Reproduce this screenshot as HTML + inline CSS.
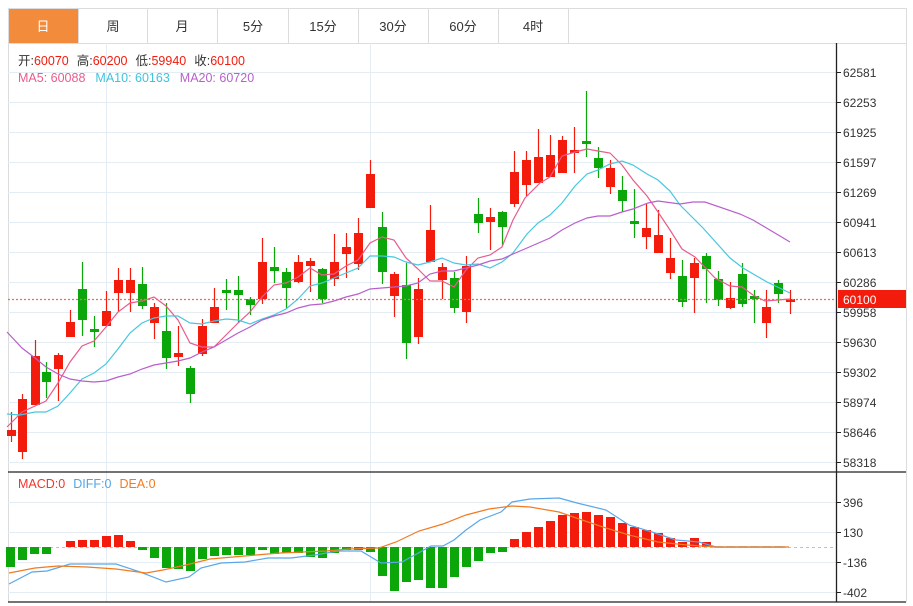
<!DOCTYPE html>
<html><head><meta charset="utf-8"><style>
html,body{margin:0;padding:0;background:#fff;width:913px;height:606px;overflow:hidden}
svg{display:block;font-family:"Liberation Sans","Noto Sans CJK SC",sans-serif}
</style></head><body>
<svg width="913" height="606" viewBox="0 0 913 606" xmlns="http://www.w3.org/2000/svg">
<!-- tabs -->
<rect x="8.5" y="8.5" width="898" height="35" fill="#fff" stroke="#dcdcdc"/>
<rect x="9" y="9" width="69" height="34" fill="#f28c3c"/>
<g stroke="#dcdcdc"><path d="M78.5 8V43M147.5 8V43M217.5 8V43M288.5 8V43M358.5 8V43M428.5 8V43M498.5 8V43M568.5 8V43"/></g>
<g font-size="13" fill="#333" text-anchor="middle">
<text x="43" y="31" fill="#fff">日</text><text x="113" y="31">周</text><text x="182" y="31">月</text><text x="253" y="31">5分</text><text x="323" y="31">15分</text><text x="393" y="31">30分</text><text x="463" y="31">60分</text><text x="533" y="31">4时</text>
</g>
<!-- frame -->
<path d="M8.5 43V602M906.5 43V602" stroke="#dcdcdc"/>
<!-- grid -->
<g stroke="#e3edf3"><path d="M8 72.5H837M8 102.5H837M8 132.5H837M8 162.5H837M8 192.5H837M8 222.5H837M8 252.5H837M8 282.5H837M8 312.5H837M8 342.5H837M8 372.5H837M8 402.5H837M8 432.5H837M8 462.5H837M8 502.5H837M8 532.5H837M8 562.5H837M8 592.5H837M106.5 43V602M370.5 43V602"/></g>
<!-- axis -->
<path d="M836.5 43V602M8 472H906M8 602H906" stroke="#222" stroke-width="1.3"/>
<g stroke="#222"><path d="M837 72.5h4M837 102.5h4M837 132.5h4M837 162.5h4M837 192.5h4M837 222.5h4M837 252.5h4M837 282.5h4M837 312.5h4M837 342.5h4M837 372.5h4M837 402.5h4M837 432.5h4M837 462.5h4M837 502.5h4M837 532.5h4M837 562.5h4M837 592.5h4"/></g>
<g font-size="12" fill="#333">
<text x="843" y="77">62581</text><text x="843" y="107">62253</text><text x="843" y="137">61925</text><text x="843" y="167">61597</text><text x="843" y="197">61269</text><text x="843" y="227">60941</text><text x="843" y="257">60613</text><text x="843" y="287">60286</text><text x="843" y="317">59958</text><text x="843" y="347">59630</text><text x="843" y="377">59302</text><text x="843" y="407">58974</text><text x="843" y="437">58646</text><text x="843" y="467">58318</text>
<text x="843" y="507">396</text><text x="843" y="537">130</text><text x="843" y="567">-136</text><text x="843" y="597">-402</text>
</g>
<!-- legend -->
<g font-size="12.5">
<text x="18" y="65"><tspan fill="#333">开:</tspan><tspan fill="#f21b0c">60070</tspan><tspan fill="#333" dx="8">高:</tspan><tspan fill="#f21b0c">60200</tspan><tspan fill="#333" dx="8">低:</tspan><tspan fill="#f21b0c">59940</tspan><tspan fill="#333" dx="8">收:</tspan><tspan fill="#f21b0c">60100</tspan></text>
<text x="18" y="82"><tspan fill="#ea5b8c">MA5: 60088</tspan><tspan fill="#3fc3de" dx="10">MA10: 60163</tspan><tspan fill="#b85fcc" dx="10">MA20: 60720</tspan></text>
<text x="18" y="488"><tspan fill="#f2352a">MACD:0</tspan><tspan fill="#4fa6ea" dx="8">DIFF:0</tspan><tspan fill="#f07b22" dx="8">DEA:0</tspan></text>
</g>
<!-- candles red -->
<path fill="none" stroke="#f21b0c" stroke-width="1.2" d="M11.5 412V442M22.5 394V459M35.5 340V405M58.5 353V401M70.5 310V337M106.5 291V326M118.5 268V312M130.5 268V312M154.5 303V339M178.5 326V366M202.5 319V356M214.5 288V323M262.5 238V304M298.5 255V283M310.5 258V292M334.5 234V286M346.5 233V278M358.5 218V270M370.5 160V208M394.5 272V317M418.5 278V344M430.5 205V262M442.5 263V299M466.5 256V323M490.5 208V250M514.5 151V207M526.5 151V196M538.5 129V183M550.5 135V177M562.5 136V173M574.5 127V173M610.5 160V194M646.5 204V249M658.5 210V253M670.5 238V279M694.5 258V313M730.5 282V309M766.5 290V338M790.5 290V314"/>
<path fill="#f21b0c" d="M7 430h9v6h-9zM18 399h9v53h-9zM31 356h9v49h-9zM54 355h9v14h-9zM66 322h9v15h-9zM102 311h9v15h-9zM114 280h9v13h-9zM126 280h9v13h-9zM150 307h9v16h-9zM174 353h9v4h-9zM198 326h9v28h-9zM210 307h9v16h-9zM258 262h9v37h-9zM294 262h9v20h-9zM306 261h9v5h-9zM330 262h9v17h-9zM342 247h9v7h-9zM354 233h9v31h-9zM366 174h9v34h-9zM390 274h9v22h-9zM414 289h9v48h-9zM426 230h9v32h-9zM438 267h9v13h-9zM462 266h9v46h-9zM486 217h9v5h-9zM510 172h9v32h-9zM522 160h9v25h-9zM534 157h9v26h-9zM546 155h9v22h-9zM558 140h9v33h-9zM570 150h9v3h-9zM606 168h9v19h-9zM642 228h9v9h-9zM654 235h9v18h-9zM666 258h9v15h-9zM690 263h9v15h-9zM726 298h9v10h-9zM762 307h9v16h-9zM786 299h9v3h-9z"/>
<!-- candles green -->
<path fill="none" stroke="#0aa60a" stroke-width="1.2" d="M46.5 362V398M82.5 262V336M94.5 316V347M142.5 267V309M166.5 303V369M190.5 366V403M226.5 279V310M238.5 276V323M250.5 297V315M274.5 247V283M286.5 268V309M322.5 268V303M382.5 212V284M406.5 263V359M454.5 272V313M478.5 198V233M502.5 211V246M586.5 91V157M598.5 147V178M622.5 176V212M634.5 189V238M682.5 260V307M706.5 253V303M718.5 271V306M742.5 263V307M754.5 290V323M778.5 280V303"/>
<path fill="#0aa60a" d="M42 372h9v10h-9zM78 289h9v31h-9zM90 329h9v3h-9zM138 284h9v22h-9zM162 331h9v27h-9zM186 368h9v26h-9zM222 290h9v3h-9zM234 290h9v5h-9zM246 299h9v6h-9zM270 267h9v4h-9zM282 272h9v16h-9zM318 269h9v30h-9zM378 227h9v45h-9zM402 285h9v58h-9zM450 278h9v30h-9zM474 214h9v9h-9zM498 212h9v15h-9zM582 141h9v3h-9zM594 158h9v10h-9zM618 190h9v11h-9zM630 221h9v3h-9zM678 276h9v26h-9zM702 256h9v13h-9zM714 279h9v21h-9zM738 274h9v30h-9zM750 296h9v3h-9zM774 283h9v11h-9z"/>
<!-- MA lines -->
<polyline fill="none" stroke="#ea5b8c" stroke-width="1.2" points="7,427 22,412 35,406 46,401 58,383 70,362 82,346 94,341 106,327 118,312 130,303 142,301 154,297 166,306 178,320 190,343 202,347 214,347 226,335 238,323 250,312 262,297 274,285 286,283 298,277 310,268 322,275 334,274 346,266 358,260 370,243 382,237 394,240 406,258 418,269 430,281 442,281 454,287 466,270 478,258 490,255 502,247 513,220 525,198 540,183 550,177 562,156 575,152 587,149 598,151 610,153 622,165 633,180 647,196 658,212 670,230 682,249 695,257 715,278 730,286 742,287 753,295 765,301 790,299"/>
<polyline fill="none" stroke="#47c7e0" stroke-width="1.2" points="7,414 20,415 35,412 46,412 58,406 70,393 82,379 94,373 106,364 118,349 130,333 142,323 154,318 166,316 178,316 190,323 202,324 214,321 226,319 238,320 250,324 262,319 274,315 286,309 298,299 310,286 322,283 334,278 346,273 358,268 370,256 382,256 394,257 406,262 418,265 430,262 442,258 454,263 466,265 478,264 490,268 502,262 513,253 527,234 538,223 550,215 562,203 575,186 587,174 598,170 610,164 622,161 633,165 647,174 658,180 670,191 680,205 703,228 730,258 743,268 767,282 790,293"/>
<polyline fill="none" stroke="#b85fcc" stroke-width="1.2" points="7,332 22,348 35,358 46,367 58,374 70,379 82,381 94,382 106,381 118,377 130,374 142,369 154,365 166,363 178,361 190,358 202,352 214,347 226,340 238,333 250,327 262,320 274,316 286,313 298,308 310,305 322,304 334,301 346,297 358,294 370,289 382,288 394,287 406,286 418,283 430,274 442,271 454,271 466,268 478,265 490,261 502,259 513,254 527,248 550,238 562,230 575,223 587,218 598,216 610,216 622,212 633,209 648,203 658,201 680,204 693,202 705,202 740,214 753,220 790,242"/>
<!-- current price -->
<path d="M8 299.5H836" stroke="#f26a5e" stroke-width="1.2" stroke-dasharray="2,2"/>
<rect x="838" y="290" width="68" height="18" fill="#f21b0c"/>
<text x="843" y="304" font-size="12" fill="#fff">60100</text>
<!-- MACD -->
<path d="M8 547.5H834" stroke="#8fd3ee" stroke-dasharray="3,3"/>
<path fill="#f21b0c" d="M66 541h9v6h-9zM78 540h9v7h-9zM90 540h9v7h-9zM102 536h9v11h-9zM114 535h9v12h-9zM126 541h9v6h-9zM510 539h9v8h-9zM522 532h9v15h-9zM534 527h9v20h-9zM546 521h9v26h-9zM558 515h9v32h-9zM570 513h9v34h-9zM582 512h9v35h-9zM594 515h9v32h-9zM606 517h9v30h-9zM618 523h9v24h-9zM630 527h9v20h-9zM642 530h9v17h-9zM654 533h9v14h-9zM666 538h9v9h-9zM678 542h9v5h-9zM690 538h9v9h-9zM702 542h9v5h-9z"/>
<path fill="#0aa60a" d="M6 547h9v20h-9zM18 547h9v13h-9zM30 547h9v7h-9zM42 547h9v7h-9zM138 547h9v3h-9zM150 547h9v11h-9zM162 547h9v21h-9zM174 547h9v22h-9zM186 547h9v24h-9zM198 547h9v12h-9zM210 547h9v9h-9zM222 547h9v8h-9zM234 547h9v8h-9zM246 547h9v8h-9zM258 547h9v3h-9zM270 547h9v7h-9zM282 547h9v6h-9zM294 547h9v6h-9zM306 547h9v10h-9zM318 547h9v11h-9zM330 547h9v6h-9zM342 547h9v3h-9zM354 547h9v3h-9zM366 547h9v5h-9zM378 547h9v29h-9zM390 547h9v44h-9zM402 547h9v35h-9zM414 547h9v33h-9zM426 547h9v41h-9zM438 547h9v41h-9zM450 547h9v30h-9zM462 547h9v20h-9zM474 547h9v14h-9zM486 547h9v6h-9zM498 547h9v5h-9z"/>
<path fill="#ccc" d="M714 546h9v2h-9zM726 546h9v2h-9zM738 546h9v2h-9zM750 546h9v2h-9zM762 546h9v2h-9zM774 546h9v2h-9z"/>
<polyline fill="none" stroke="#5aa7e8" stroke-width="1.2" points="9,584 32,572 47,571 70,564 93,564 116,564 140,572 166,582 189,577 201,568 221,563 245,562 268,558 291,558 315,555 338,551 361,551 381,563 402,562 431,546 443,546 454,540 466,530 480,520 501,512 512,502 530,499 559,498 577,503 606,510 629,525 652,532 676,540 699,542 716,547 786,547"/>
<polyline fill="none" stroke="#f07b22" stroke-width="1.2" points="9,573 35,568 58,566 87,567 116,569 146,573 163,570 186,565 210,559 233,557 256,555 280,553 303,552 326,551 349,549 379,548 396,542 419,531 443,524 466,515 489,509 512,506 530,507 559,512 582,520 606,528 629,535 658,542 687,545 716,547 789,547"/>
</svg>
</body></html>
